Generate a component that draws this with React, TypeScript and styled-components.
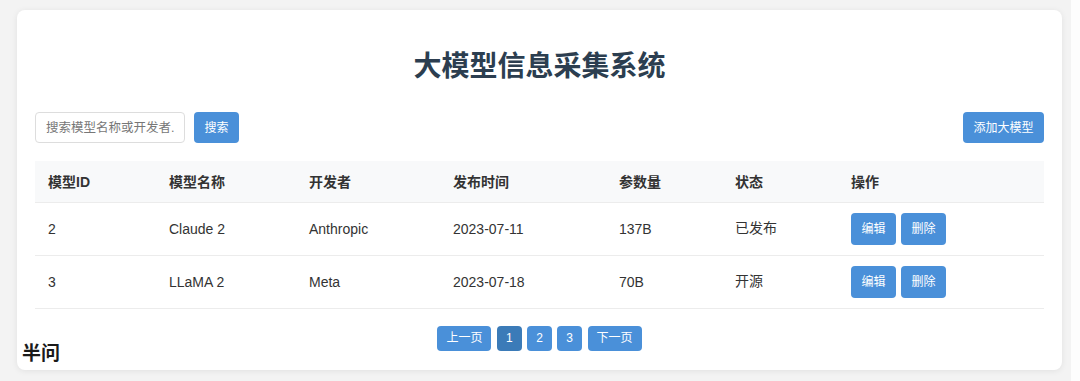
import React from "react";
import styled, { createGlobalStyle } from "styled-components";

const Global = createGlobalStyle`
  html, body { margin: 0; padding: 0; background: #fdfdfd; }
  body { font-family: "Liberation Sans", "Noto Sans CJK SC", sans-serif; color: #333; }
  * { box-sizing: border-box; }
`;

const Page = styled.div`
  position: relative;
  width: 1071px;
  height: 381px;
  background: #f3f3f3;
  padding: 10px 9px 11px 17px;
`;

const Card = styled.div`
  width: 1045px;
  height: 360px;
  background: #fff;
  border-radius: 8px;
  box-shadow: 0 1px 6px rgba(0, 0, 0, 0.08);
  padding: 18px 18px 0 18px;
  display: flex;
  flex-direction: column;
`;

const Title = styled.h1`
  margin: 22px 0 28px;
  height: 34px;
  line-height: 34px;
  text-align: center;
  font-size: 28px;
  font-weight: 700;
  color: #2c3e50;
`;

const Toolbar = styled.div`
  display: flex;
  align-items: center;
  height: 31px;
  gap: 9px;
  margin-bottom: 18px;
`;

const SearchInput = styled.input`
  width: 150px;
  height: 31px;
  border: 1px solid #ddd;
  border-radius: 4px;
  padding: 0 10px;
  font-family: inherit;
  font-size: 12.5px;
  color: #333;
  outline: none;
  &::placeholder { color: #777; }
`;

const Button = styled.button<{ $active?: boolean; $h?: number }>`
  height: ${(p) => p.$h ?? 31}px;
  padding: 0 10.5px;
  border: none;
  border-radius: 4px;
  background: ${(p) => (p.$active ? "#3b7bb8" : "#4a90d9")};
  color: #fff;
  font-family: inherit;
  font-size: 12px;
  line-height: 1;
  cursor: pointer;
  white-space: nowrap;
`;

const Spacer = styled.div`
  flex: 1;
`;

const Table = styled.table`
  width: 1009px;
  border-collapse: collapse;
  table-layout: fixed;
  font-size: 14px;
`;

const HeadRow = styled.tr`
  height: 41px;
  background: #f8f9fa;
  border-bottom: 1px solid #ececec;
`;

const Th = styled.th<{ $w: number }>`
  width: ${(p) => p.$w}px;
  padding: 0 13px;
  text-align: left;
  font-weight: 700;
  color: #333;
`;

const Row = styled.tr`
  height: 53px;
  border-bottom: 1px solid #ececec;
`;

const Td = styled.td<{ $cjk?: boolean }>`
  padding: ${(p) => (p.$cjk ? "0 13px 3px" : "0 13px")};
  color: #333;
  line-height: 20px;
  font-family: ${(p) =>
    p.$cjk ? '"Noto Sans CJK SC", sans-serif' : '"Liberation Sans", "Noto Sans CJK SC", sans-serif'};
`;

const Actions = styled.div`
  display: flex;
  gap: 5px;
`;

const Pager = styled.div`
  display: flex;
  justify-content: center;
  gap: 5.5px;
  margin-top: 17px;
`;

const PageButton = styled(Button)`
  padding: 0 9px;
`;

const Watermark = styled.div`
  position: absolute;
  left: 22px;
  top: 338px;
  font-size: 19px;
  font-weight: 700;
  color: #1a1a1a;
`;

const cols = [
  { label: "模型ID", w: 121 },
  { label: "模型名称", w: 140 },
  { label: "开发者", w: 144 },
  { label: "发布时间", w: 166 },
  { label: "参数量", w: 116 },
  { label: "状态", w: 116 },
  { label: "操作", w: 206 },
];

const rows = [
  { id: "2", name: "Claude 2", dev: "Anthropic", date: "2023-07-11", params: "137B", status: "已发布" },
  { id: "3", name: "LLaMA 2", dev: "Meta", date: "2023-07-18", params: "70B", status: "开源" },
];

export default function App() {
  return (
    <>
      <Global />
      <Page>
        <Card>
          <Title>大模型信息采集系统</Title>
          <Toolbar>
            <SearchInput placeholder="搜索模型名称或开发者..." />
            <Button>搜索</Button>
            <Spacer />
            <Button>添加大模型</Button>
          </Toolbar>
          <Table>
            <thead>
              <HeadRow>
                {cols.map((c) => (
                  <Th key={c.label} $w={c.w}>{c.label}</Th>
                ))}
              </HeadRow>
            </thead>
            <tbody>
              {rows.map((r) => (
                <Row key={r.id}>
                  <Td>{r.id}</Td>
                  <Td>{r.name}</Td>
                  <Td>{r.dev}</Td>
                  <Td>{r.date}</Td>
                  <Td>{r.params}</Td>
                  <Td $cjk>{r.status}</Td>
                  <Td>
                    <Actions>
                      <Button $h={32}>编辑</Button>
                      <Button $h={32}>删除</Button>
                    </Actions>
                  </Td>
                </Row>
              ))}
            </tbody>
          </Table>
          <Pager>
            <PageButton $h={25}>上一页</PageButton>
            <PageButton $h={25} $active>1</PageButton>
            <PageButton $h={25}>2</PageButton>
            <PageButton $h={25}>3</PageButton>
            <PageButton $h={25}>下一页</PageButton>
          </Pager>
        </Card>
        <Watermark>半问</Watermark>
      </Page>
    </>
  );
}
